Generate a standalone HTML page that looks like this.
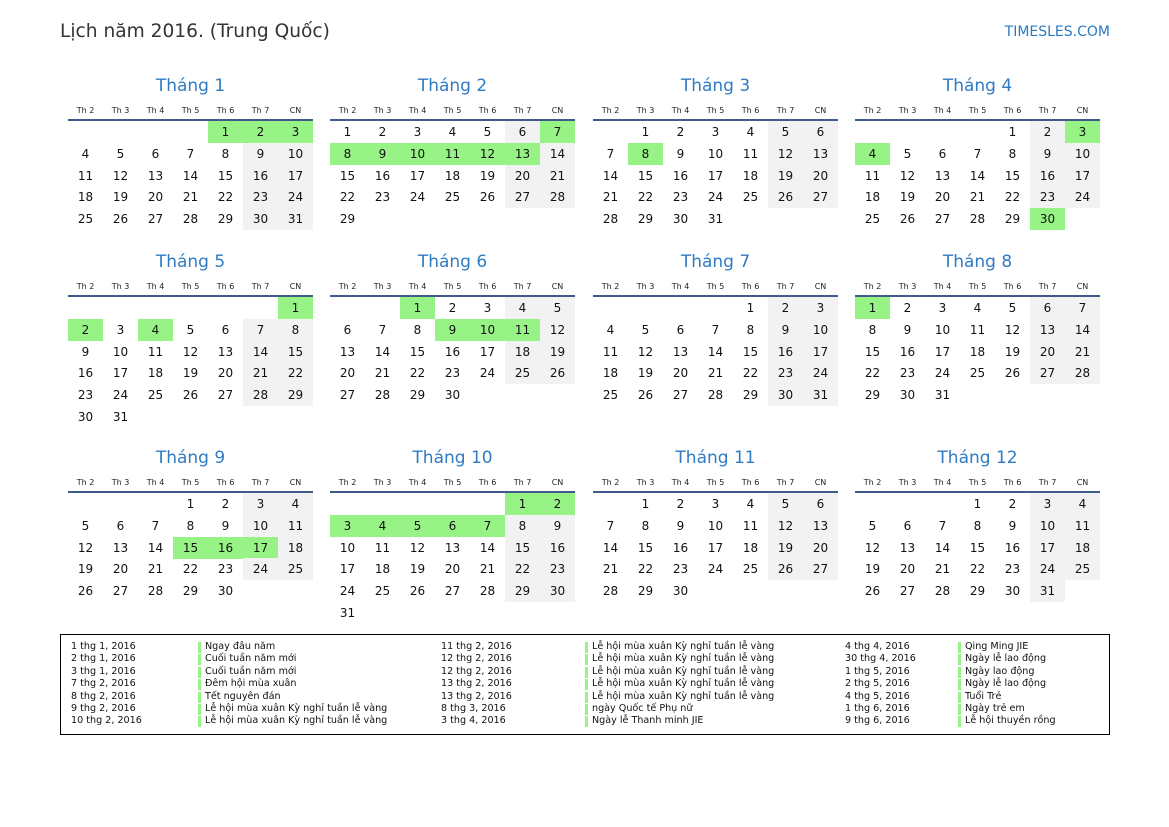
<!DOCTYPE html>
<html><head><meta charset="utf-8">
<style>
body{margin:0;width:1169px;height:827px;background:#fff;position:relative;font-family:"DejaVu Sans","Liberation Sans",sans-serif;overflow:hidden}
.a{position:absolute;white-space:nowrap}
.t{font-size:18.6px;color:#333;left:60px;top:21px}
.logo{font-size:14px;color:#2a7ac0;right:59px;top:24px}
.mt{font-size:17px;color:#2f7bc4;text-align:center;width:245px}
.h{font-size:8px;color:#222;text-align:center;width:35px}
.ln{height:2px;background:#3f5b8c;width:245px}
.c{width:35px;height:22px;line-height:23px;text-align:center;font-size:12px;color:#111}
.w{background:#f2f2f2}.g{background:#98f386}
.box{left:60px;top:634px;width:1048px;height:99px;border:1px solid #000}
.l{font-size:9.6px;color:#111}
.b{width:3px;height:11px;background:#98f386}
</style></head><body>
<div class="a t">Lịch năm 2016. (Trung Quốc)</div>
<div class="a logo">TIMESLES.COM</div>
<div class="a box"></div>
<div id="r"></div>
<script>
var H={1:[1,2,3],2:[7,8,9,10,11,12,13],3:[8],4:[3,4,30],5:[1,2,4],6:[1,9,10,11],8:[1],9:[15,16,17],10:[1,2,3,4,5,6,7]};
var X=[68,330,593,855],L=[120,296,492],s='',hd=['Th 2','Th 3','Th 4','Th 5','Th 6','Th 7','CN'];
for(var m=1;m<=12;m++){var x=X[(m-1)%4],ly=L[Math.floor((m-1)/4)];
s+='<div class="a mt" style="left:'+x+'px;top:'+(ly-44)+'px">Tháng '+m+'</div>';
for(var i=0;i<7;i++)s+='<div class="a h" style="left:'+(x+i*35)+'px;top:'+(ly-14)+'px">'+hd[i]+'</div>';
s+='<div class="a ln" style="left:'+x+'px;top:'+(ly-1)+'px"></div>';
var f=(new Date(2016,m-1,1).getDay()+6)%7,n=new Date(2016,m,0).getDate();
for(var d=1;d<=n;d++){var p=f+d-1,c=p%7,r=Math.floor(p/7);var cl='c';
if(H[m]&&H[m].indexOf(d)>=0)cl+=' g';else if(c>=5)cl+=' w';
s+='<div class="a '+cl+'" style="left:'+(x+c*35)+'px;top:'+(ly+1+r*21.75)+'px">'+d+'</div>';}}
var C=[[71,198,[['1 thg 1, 2016','Ngay đâu năm'],['2 thg 1, 2016','Cuối tuần năm mới'],['3 thg 1, 2016','Cuối tuần năm mới'],['7 thg 2, 2016','Đêm hội mùa xuân'],['8 thg 2, 2016','Tết nguyên đán'],['9 thg 2, 2016','Lễ hội mùa xuân Kỳ nghỉ tuần lễ vàng'],['10 thg 2, 2016','Lễ hội mùa xuân Kỳ nghỉ tuần lễ vàng']]],
[441,585,[['11 thg 2, 2016','Lễ hội mùa xuân Kỳ nghỉ tuần lễ vàng'],['12 thg 2, 2016','Lễ hội mùa xuân Kỳ nghỉ tuần lễ vàng'],['12 thg 2, 2016','Lễ hội mùa xuân Kỳ nghỉ tuần lễ vàng'],['13 thg 2, 2016','Lễ hội mùa xuân Kỳ nghỉ tuần lễ vàng'],['13 thg 2, 2016','Lễ hội mùa xuân Kỳ nghỉ tuần lễ vàng'],['8 thg 3, 2016','ngày Quốc tế Phụ nữ'],['3 thg 4, 2016','Ngày lễ Thanh minh JIE']]],
[845,958,[['4 thg 4, 2016','Qing Ming JIE'],['30 thg 4, 2016','Ngày lễ lao động'],['1 thg 5, 2016','Ngày lao động'],['2 thg 5, 2016','Ngày lễ lao động'],['4 thg 5, 2016','Tuổi Trẻ'],['1 thg 6, 2016','Ngày trẻ em'],['9 thg 6, 2016','Lễ hội thuyền rồng']]]];
C.forEach(function(k){k[2].forEach(function(e,i){var y=641+i*12.4;
s+='<div class="a l" style="left:'+k[0]+'px;top:'+y+'px">'+e[0]+'</div><div class="a b" style="left:'+k[1]+'px;top:'+(y+1)+'px"></div><div class="a l" style="left:'+(k[1]+7)+'px;top:'+y+'px">'+e[1]+'</div>';});});
document.getElementById('r').innerHTML=s;
</script>
</body></html>
